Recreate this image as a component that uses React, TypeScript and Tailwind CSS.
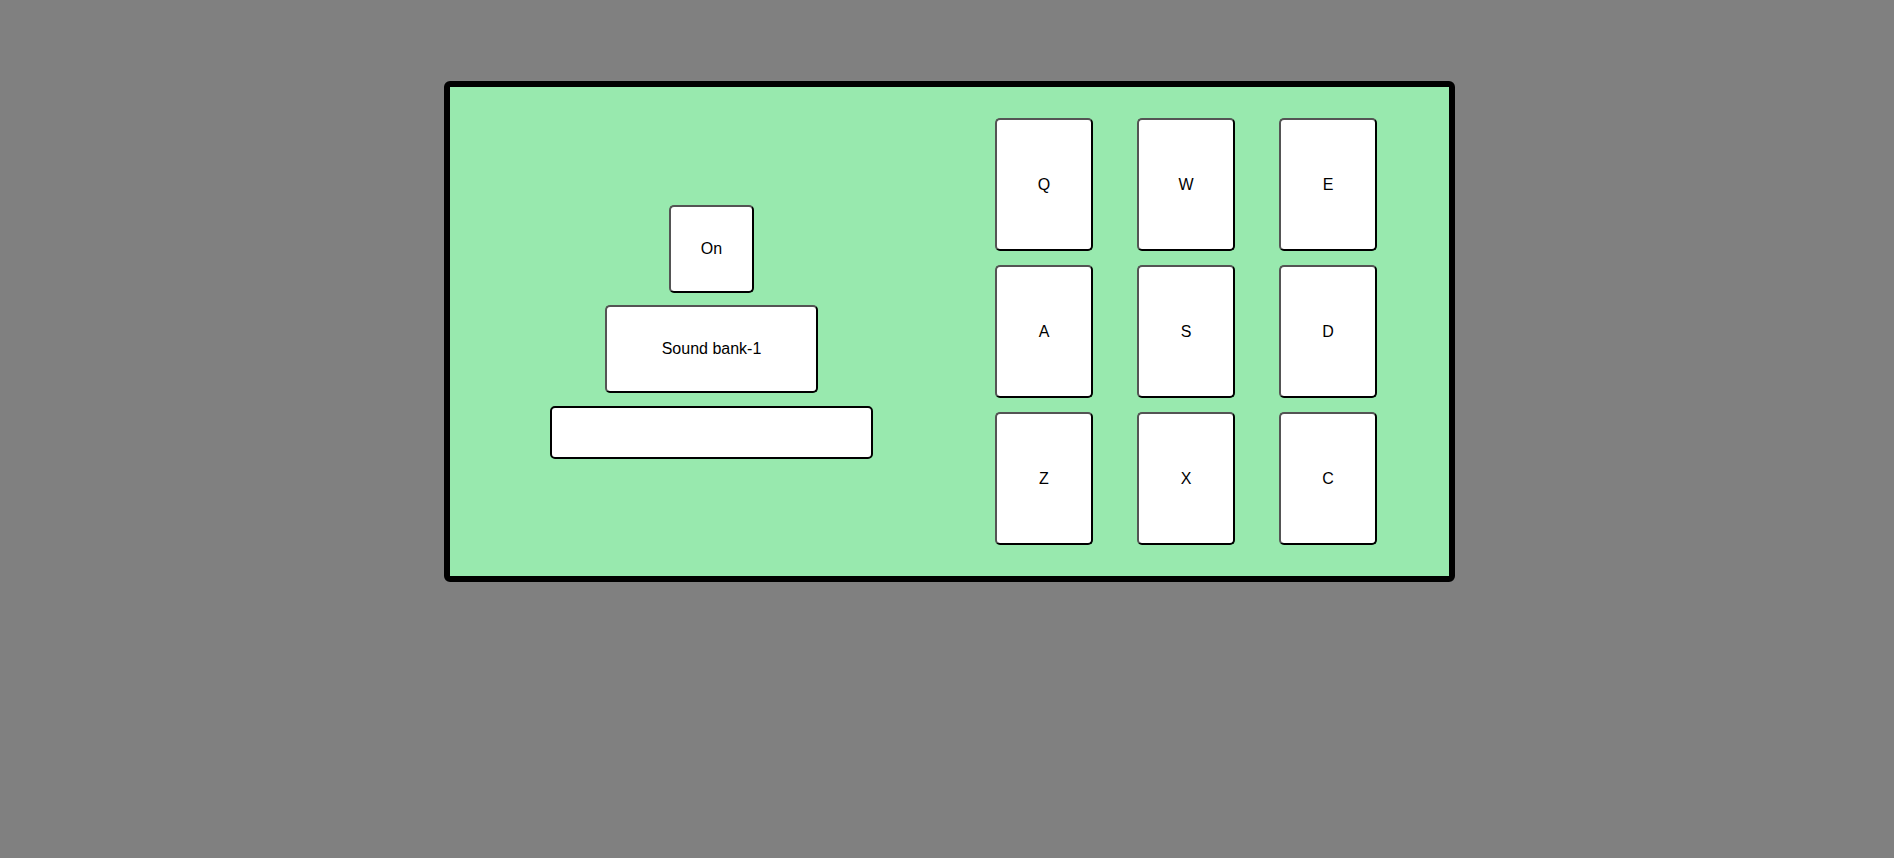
const pads = ['Q', 'W', 'E', 'A', 'S', 'D', 'Z', 'X', 'C'];

const App = () => {
  return (
    <div className="min-h-[858px] w-full bg-[#808080] pt-[81px] font-['Liberation_Sans',Arial,sans-serif] text-base text-black">
      <div className="ml-[444px] flex h-[501px] w-[1011px] items-center rounded-[6px] border-[6px] border-black bg-[#98e9ae] pl-[100px]">
        <div className="flex w-[323px] flex-col items-center gap-[12px]">
          <button className="h-[88px] w-[85px] rounded-[5px] border-2 border-black bg-white [border-style:outset]">
            On
          </button>
          <button className="h-[88px] w-[213px] rounded-[5px] border-2 border-black bg-white [border-style:outset]">
            Sound bank-1
          </button>
          <div className="mt-px h-[53px] w-[323px] rounded-[5px] border-2 border-black bg-white"></div>
        </div>
        <div className="ml-[122px] grid grid-cols-[98px_98px_98px] gap-x-[44px] gap-y-[14px]">
          {pads.map((k) => (
            <button
              key={k}
              className="flex h-[133px] w-[98px] items-center justify-center rounded-[5px] border-2 border-black bg-white [border-style:outset]"
            >
              {k}
            </button>
          ))}
        </div>
      </div>
    </div>
  );
};

export default App;
